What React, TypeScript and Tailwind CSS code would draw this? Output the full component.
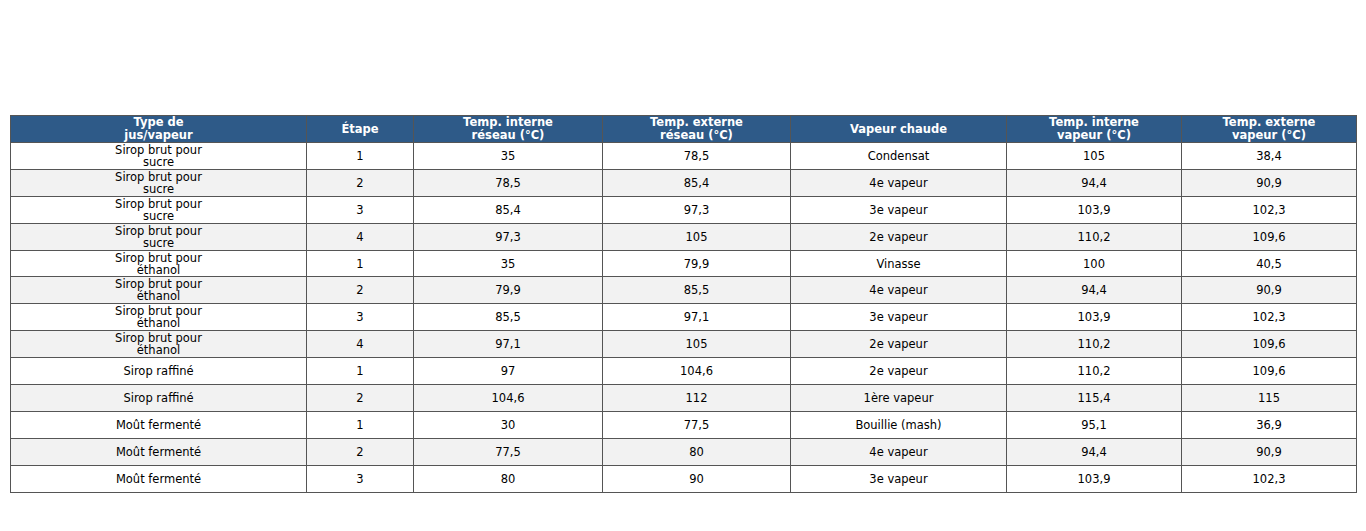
import React from "react";

const headers = [
  ["Type de", "jus/vapeur"],
  ["Étape"],
  ["Temp. interne", "réseau (°C)"],
  ["Temp. externe", "réseau (°C)"],
  ["Vapeur chaude"],
  ["Temp. interne", "vapeur (°C)"],
  ["Temp. externe", "vapeur (°C)"],
];

const widths = ["w-[296px]", "w-[107px]", "w-[189px]", "w-[188px]", "w-[216px]", "w-[175px]", "w-[175px]"];

const rows: string[][] = [
  ["Sirop brut pour\nsucre", "1", "35", "78,5", "Condensat", "105", "38,4"],
  ["Sirop brut pour\nsucre", "2", "78,5", "85,4", "4e vapeur", "94,4", "90,9"],
  ["Sirop brut pour\nsucre", "3", "85,4", "97,3", "3e vapeur", "103,9", "102,3"],
  ["Sirop brut pour\nsucre", "4", "97,3", "105", "2e vapeur", "110,2", "109,6"],
  ["Sirop brut pour\néthanol", "1", "35", "79,9", "Vinasse", "100", "40,5"],
  ["Sirop brut pour\néthanol", "2", "79,9", "85,5", "4e vapeur", "94,4", "90,9"],
  ["Sirop brut pour\néthanol", "3", "85,5", "97,1", "3e vapeur", "103,9", "102,3"],
  ["Sirop brut pour\néthanol", "4", "97,1", "105", "2e vapeur", "110,2", "109,6"],
  ["Sirop raffiné", "1", "97", "104,6", "2e vapeur", "110,2", "109,6"],
  ["Sirop raffiné", "2", "104,6", "112", "1ère vapeur", "115,4", "115"],
  ["Moût fermenté", "1", "30", "77,5", "Bouillie (mash)", "95,1", "36,9"],
  ["Moût fermenté", "2", "77,5", "80", "4e vapeur", "94,4", "90,9"],
  ["Moût fermenté", "3", "80", "90", "3e vapeur", "103,9", "102,3"],
];

export default function App() {
  return (
    <div className="w-[1366px] h-[531px] bg-white pt-[115px] pl-[10px] font-['DejaVu_Sans',sans-serif]">
      <table className="table-fixed border-collapse w-[1346px] text-[11.5px] leading-[12px] text-black">
        <thead>
          <tr className="h-[27px] bg-[#2e5a88]">
            {headers.map((h, i) => (
              <th key={i} className={`${widths[i]} border border-[#555] text-white font-bold text-center align-middle p-0 leading-[13px]`}>
                {h.map((l, j) => (
                  <div key={j}>{l}</div>
                ))}
              </th>
            ))}
          </tr>
        </thead>
        <tbody>
          {rows.map((r, ri) => (
            <tr key={ri} className={`h-[26.9px] ${ri % 2 === 1 ? "bg-[#f2f2f2]" : "bg-white"}`}>
              {r.map((c, ci) => (
                <td key={ci} className="border border-[#555] text-center align-middle p-0">
                  {c.split("\n").map((l, j) => (
                    <div key={j}>{l}</div>
                  ))}
                </td>
              ))}
            </tr>
          ))}
        </tbody>
      </table>
    </div>
  );
}
